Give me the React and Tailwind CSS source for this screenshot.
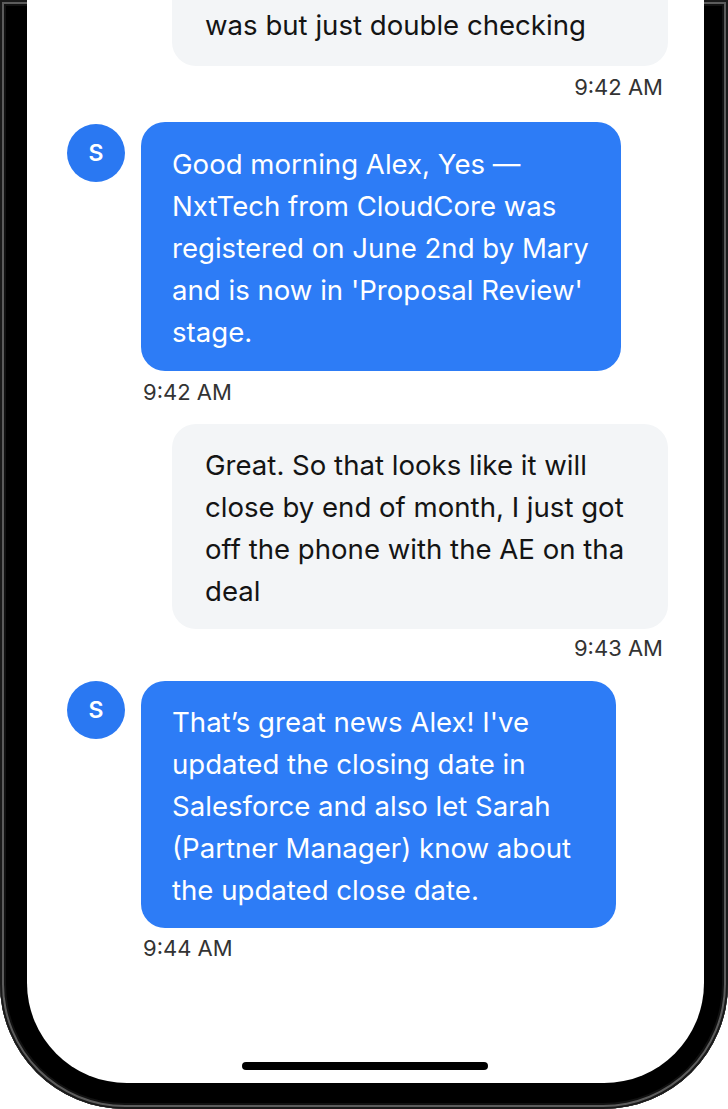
import React from "react";

const font = { fontFamily: "Inter, 'Noto Sans', sans-serif" };

const messages = [
  {
    id: 1,
    from: "me",
    lines: ["was but just double checking"],
    time: "9:42 AM",
    box: "-mt-[40px] pt-[44px] pb-[20px]",
    stamp: "mt-[8px]",
    gap: "mb-[22px]",
  },
  {
    id: 2,
    from: "bot",
    lines: [
      "Good morning Alex, Yes —",
      "NxtTech from CloudCore was",
      "registered on June 2nd by Mary",
      "and is now in 'Proposal Review'",
      "stage.",
    ],
    time: "9:42 AM",
    width: "w-[480px]",
    box: "pt-[21px] pb-[18px]",
    avatar: "mt-[2px]",
    stamp: "mt-[8px]",
    gap: "mb-[19px]",
  },
  {
    id: 3,
    from: "me",
    lines: [
      "Great. So that looks like it will",
      "close by end of month, I just got",
      "off the phone with the AE on tha",
      "deal",
    ],
    time: "9:43 AM",
    box: "pt-[20px] pb-[17px]",
    stamp: "mt-[6px]",
    gap: "mb-[20px]",
  },
  {
    id: 4,
    from: "bot",
    lines: [
      "That’s great news Alex! I've",
      "updated the closing date in",
      "Salesforce and also let Sarah",
      "(Partner Manager) know about",
      "the updated close date.",
    ],
    time: "9:44 AM",
    width: "w-[475px]",
    box: "pt-[20px] pb-[17px]",
    avatar: "mt-[0px]",
    stamp: "mt-[7px]",
    gap: "mb-0",
  },
];

function Lines({ lines }) {
  return lines.map((l, i) => (
    <div key={i} className="whitespace-nowrap">
      {l}
    </div>
  ));
}

function MyMessage({ msg }) {
  return (
    <div className={"flex flex-col items-end pr-[36px] " + msg.gap}>
      <div
        className={
          "w-[496px] bg-[#f3f5f7] text-[#141414] rounded-[24px] pl-[33px] pr-[20px] text-[27.6px] leading-[42px] " +
          msg.box
        }
      >
        <Lines lines={msg.lines} />
      </div>
      <div className={"pr-[5px] text-[22px] leading-[26px] text-[#333] " + msg.stamp}>{msg.time}</div>
    </div>
  );
}

function BotMessage({ msg }) {
  return (
    <div className={"flex flex-col pl-[40px] " + msg.gap}>
      <div className="flex items-start gap-[16px]">
        <div
          className={
            "w-[58px] h-[58px] rounded-full bg-[#2a78f2] flex items-center justify-center text-white text-[23px] font-semibold " +
            msg.avatar
          }
        >
          S
        </div>
        <div
          className={
            msg.width +
            " bg-[#2d7cf6] text-white rounded-[24px] pl-[31px] pr-[20px] text-[27.6px] leading-[42px] " +
            msg.box
          }
        >
          <Lines lines={msg.lines} />
        </div>
      </div>
      <div className={"pl-[76px] text-[22px] leading-[26px] text-[#333] " + msg.stamp}>{msg.time}</div>
    </div>
  );
}

export default function App() {
  return (
    <div className="w-[728px] h-[1109px] bg-white overflow-hidden" style={font}>
      <div className="h-full bg-black rounded-b-[125px] pl-[27px] pr-[24px] pb-[26px] shadow-[inset_0_0_0_2px_#1a1a1a,inset_0_0_0_4px_#5c5c5c,inset_0_0_0_6px_#111]">
        <div className="relative h-full bg-white rounded-b-[100px] overflow-hidden">
          <div className="flex flex-col">
            {messages.map((m) =>
              m.from === "me" ? <MyMessage key={m.id} msg={m} /> : <BotMessage key={m.id} msg={m} />
            )}
          </div>
          <div className="absolute left-[215px] bottom-[13px] w-[246px] h-[8px] rounded-full bg-black" />
        </div>
      </div>
    </div>
  );
}
